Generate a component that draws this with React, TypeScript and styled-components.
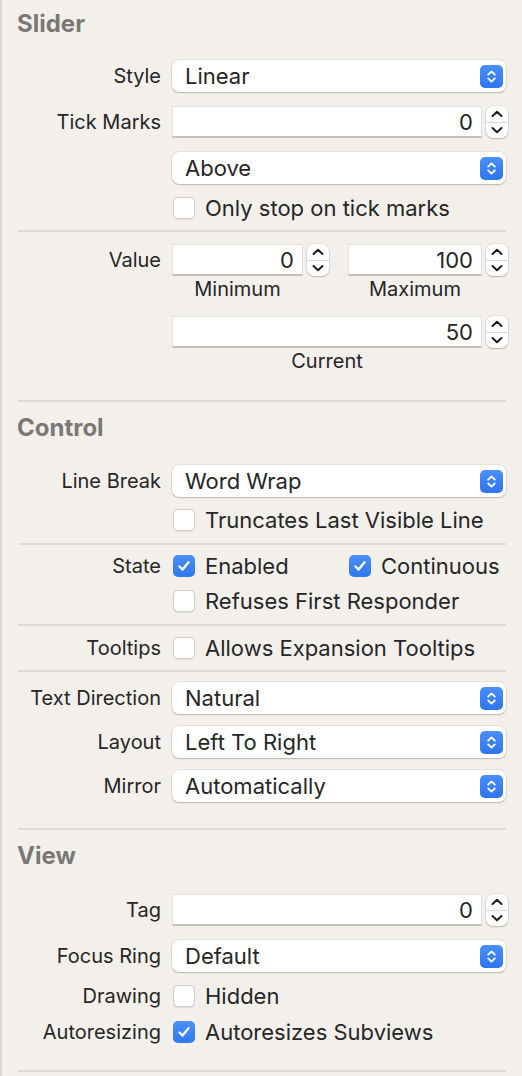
import React from "react";
import styled, { createGlobalStyle } from "styled-components";

const GlobalStyle = createGlobalStyle`
  html, body {
    margin: 0;
    padding: 0;
    background: #f3f0ec;
  }
  body {
    font-family: Inter, "Liberation Sans", sans-serif;
    -webkit-font-smoothing: antialiased;
  }
`;

const Panel = styled.div`
  width: 522px;
  min-height: 1076px;
  box-sizing: border-box;
  border-left: 2px solid #d9d5d1;
  padding-top: 9px;
  display: flex;
  flex-direction: column;
  color: #262626;
  font-size: 20px;
  line-height: 22px;
`;

const SectionTitle = styled.div<{ $mt?: number }>`
  margin-top: ${(p) => p.$mt ?? 0}px;
  padding-left: 15px;
  height: 30px;
  line-height: 30px;
  font-size: 24px;
  font-weight: 700;
  color: #7a7876;
`;

const Divider = styled.div<{ $mt: number }>`
  margin-top: ${(p) => p.$mt}px;
  margin-left: 16px;
  width: 488px;
  height: 2px;
  background: #dedad6;
`;

const Row = styled.div<{ $mt: number }>`
  margin-top: ${(p) => p.$mt}px;
  display: flex;
  align-items: center;
`;

const Label = styled.div`
  width: 159px;
  flex-shrink: 0;
  margin-right: 11px;
  text-align: right;
  white-space: nowrap;
`;

const Controls = styled.div`
  width: 336px;
`;

const Pair = styled.div`
  width: 336px;
  display: grid;
  grid-template-columns: 157px 1fr;
  column-gap: 19px;
`;

const Popup = styled.div`
  width: 334px;
  height: 32px;
  box-sizing: border-box;
  display: flex;
  align-items: center;
  padding-left: 13px;
  padding-right: 3px;
  background: #fff;
  border-radius: 7px;
  font-size: 22px;
  box-shadow: 0 0 0 0.5px rgba(0, 0, 0, 0.12), 0 1px 1.5px rgba(0, 0, 0, 0.2);
`;

const PopupText = styled.span`
  flex: 1;
`;

const NumberBox = styled.div`
  display: flex;
  gap: 4px;
`;

const Field = styled.div`
  flex: 1;
  height: 32px;
  box-sizing: border-box;
  background: #fff;
  border: 1px solid #e3dfdb;
  border-bottom: 2px solid #c5c1bd;
  text-align: right;
  padding-right: 8px;
  font-size: 22px;
  line-height: 30px;
`;

const StepperBox = styled.div`
  width: 22px;
  height: 32px;
  flex-shrink: 0;
  box-sizing: border-box;
  background: #fff;
  border-radius: 7px;
  box-shadow: 0 0 0 0.5px rgba(0, 0, 0, 0.12), 0 1px 1.5px rgba(0, 0, 0, 0.2);
  display: flex;
  flex-direction: column;
  overflow: hidden;
`;

const StepHalf = styled.div<{ $top?: boolean }>`
  flex: 1;
  display: flex;
  align-items: center;
  justify-content: center;
  border-bottom: ${(p) => (p.$top ? "1px solid #dcd8d4" : "none")};
`;

const Caption = styled.div`
  padding-right: 26px;
  text-align: center;
  line-height: 22px;
`;

const CheckLine = styled.label`
  display: flex;
  align-items: center;
  gap: 10px;
  margin-left: 1px;
  white-space: nowrap;
  font-size: 22px;
`;

const Box = styled.span<{ $on?: boolean }>`
  width: 22px;
  height: 22px;
  box-sizing: border-box;
  border-radius: 5px;
  flex-shrink: 0;
  display: flex;
  align-items: center;
  justify-content: center;
  background: ${(p) => (p.$on ? "linear-gradient(#4a8ff9, #2f77f1)" : "#fff")};
  border: ${(p) => (p.$on ? "none" : "1px solid #d2cec9")};
  box-shadow: ${(p) => (p.$on ? "none" : "0 0.5px 1px rgba(0,0,0,0.08)")};
`;

const Arrows = () => (
  <svg width="23" height="23" viewBox="0 0 23 23">
    <defs>
      <linearGradient id="pg" x1="0" y1="0" x2="0" y2="1">
        <stop offset="0" stopColor="#4a8ff9" />
        <stop offset="1" stopColor="#2e75f0" />
      </linearGradient>
    </defs>
    <rect width="23" height="23" rx="5" fill="url(#pg)" />
    <path d="M8.2 9.6 L11.5 6.4 L14.8 9.6 M8.2 13.4 L11.5 16.6 L14.8 13.4" fill="none" stroke="#fff" strokeWidth="1.9" strokeLinecap="round" strokeLinejoin="round" />
  </svg>
);

const Chevron = ({ up }: { up?: boolean }) => (
  <svg width="12" height="8" viewBox="0 0 12 8">
    <path d={up ? "M1.5 6 L6 1.8 L10.5 6" : "M1.5 2 L6 6.2 L10.5 2"} fill="none" stroke="#1f1f1f" strokeWidth="2" strokeLinecap="round" strokeLinejoin="round" />
  </svg>
);

const Stepper = () => (
  <StepperBox>
    <StepHalf $top>
      <Chevron up />
    </StepHalf>
    <StepHalf>
      <Chevron />
    </StepHalf>
  </StepperBox>
);

const Check = ({ on, text }: { on?: boolean; text: string }) => (
  <CheckLine>
    <Box $on={on}>
      {on && (
        <svg width="16" height="16" viewBox="0 0 16 16">
          <path d="M3.5 8.5 L6.6 11.6 L12.5 4.2" fill="none" stroke="#fff" strokeWidth="2.4" strokeLinecap="round" strokeLinejoin="round" />
        </svg>
      )}
    </Box>
    {text}
  </CheckLine>
);

const Select = ({ value }: { value: string }) => (
  <Popup>
    <PopupText>{value}</PopupText>
    <Arrows />
  </Popup>
);

const NumberInput = ({ value }: { value: string }) => (
  <NumberBox>
    <Field>{value}</Field>
    <Stepper />
  </NumberBox>
);

const App = () => {
  return (
    <>
      <GlobalStyle />
      <Panel>
        <SectionTitle>Slider</SectionTitle>
        <Row $mt={21}>
          <Label>Style</Label>
          <Select value="Linear" />
        </Row>
        <Row $mt={14}>
          <Label>Tick Marks</Label>
          <Controls>
            <NumberInput value="0" />
          </Controls>
        </Row>
        <Row $mt={14}>
          <Label />
          <Select value="Above" />
        </Row>
        <Row $mt={13}>
          <Label />
          <Check text="Only stop on tick marks" />
        </Row>
        <Divider $mt={11} />
        <Row $mt={12}>
          <Label>Value</Label>
          <Pair>
            <NumberInput value="0" />
            <NumberInput value="100" />
          </Pair>
        </Row>
        <Row $mt={2}>
          <Label />
          <Pair>
            <Caption>Minimum</Caption>
            <Caption>Maximum</Caption>
          </Pair>
        </Row>
        <Row $mt={16}>
          <Label />
          <Controls>
            <NumberInput value="50" />
          </Controls>
        </Row>
        <Row $mt={2}>
          <Label />
          <Controls>
            <Caption>Current</Caption>
          </Controls>
        </Row>
        <Divider $mt={28} />

        <SectionTitle $mt={11}>Control</SectionTitle>
        <Row $mt={22}>
          <Label>Line Break</Label>
          <Select value="Word Wrap" />
        </Row>
        <Row $mt={12}>
          <Label />
          <Check text="Truncates Last Visible Line" />
        </Row>
        <Divider $mt={12} />
        <Row $mt={10}>
          <Label>State</Label>
          <Pair>
            <Check on text="Enabled" />
            <Check on text="Continuous" />
          </Pair>
        </Row>
        <Row $mt={13}>
          <Label />
          <Check text="Refuses First Responder" />
        </Row>
        <Divider $mt={12} />
        <Row $mt={11}>
          <Label>Tooltips</Label>
          <Check text="Allows Expansion Tooltips" />
        </Row>
        <Divider $mt={11} />
        <Row $mt={10}>
          <Label>Text Direction</Label>
          <Select value="Natural" />
        </Row>
        <Row $mt={12}>
          <Label>Layout</Label>
          <Select value="Left To Right" />
        </Row>
        <Row $mt={12}>
          <Label>Mirror</Label>
          <Select value="Automatically" />
        </Row>
        <Divider $mt={26} />

        <SectionTitle $mt={11}>View</SectionTitle>
        <Row $mt={23}>
          <Label>Tag</Label>
          <Controls>
            <NumberInput value="0" />
          </Controls>
        </Row>
        <Row $mt={14}>
          <Label>Focus Ring</Label>
          <Select value="Default" />
        </Row>
        <Row $mt={13}>
          <Label>Drawing</Label>
          <Check text="Hidden" />
        </Row>
        <Row $mt={14}>
          <Label>Autoresizing</Label>
          <Check on text="Autoresizes Subviews" />
        </Row>
        <Divider $mt={27} />
      </Panel>
    </>
  );
};

export default App;
